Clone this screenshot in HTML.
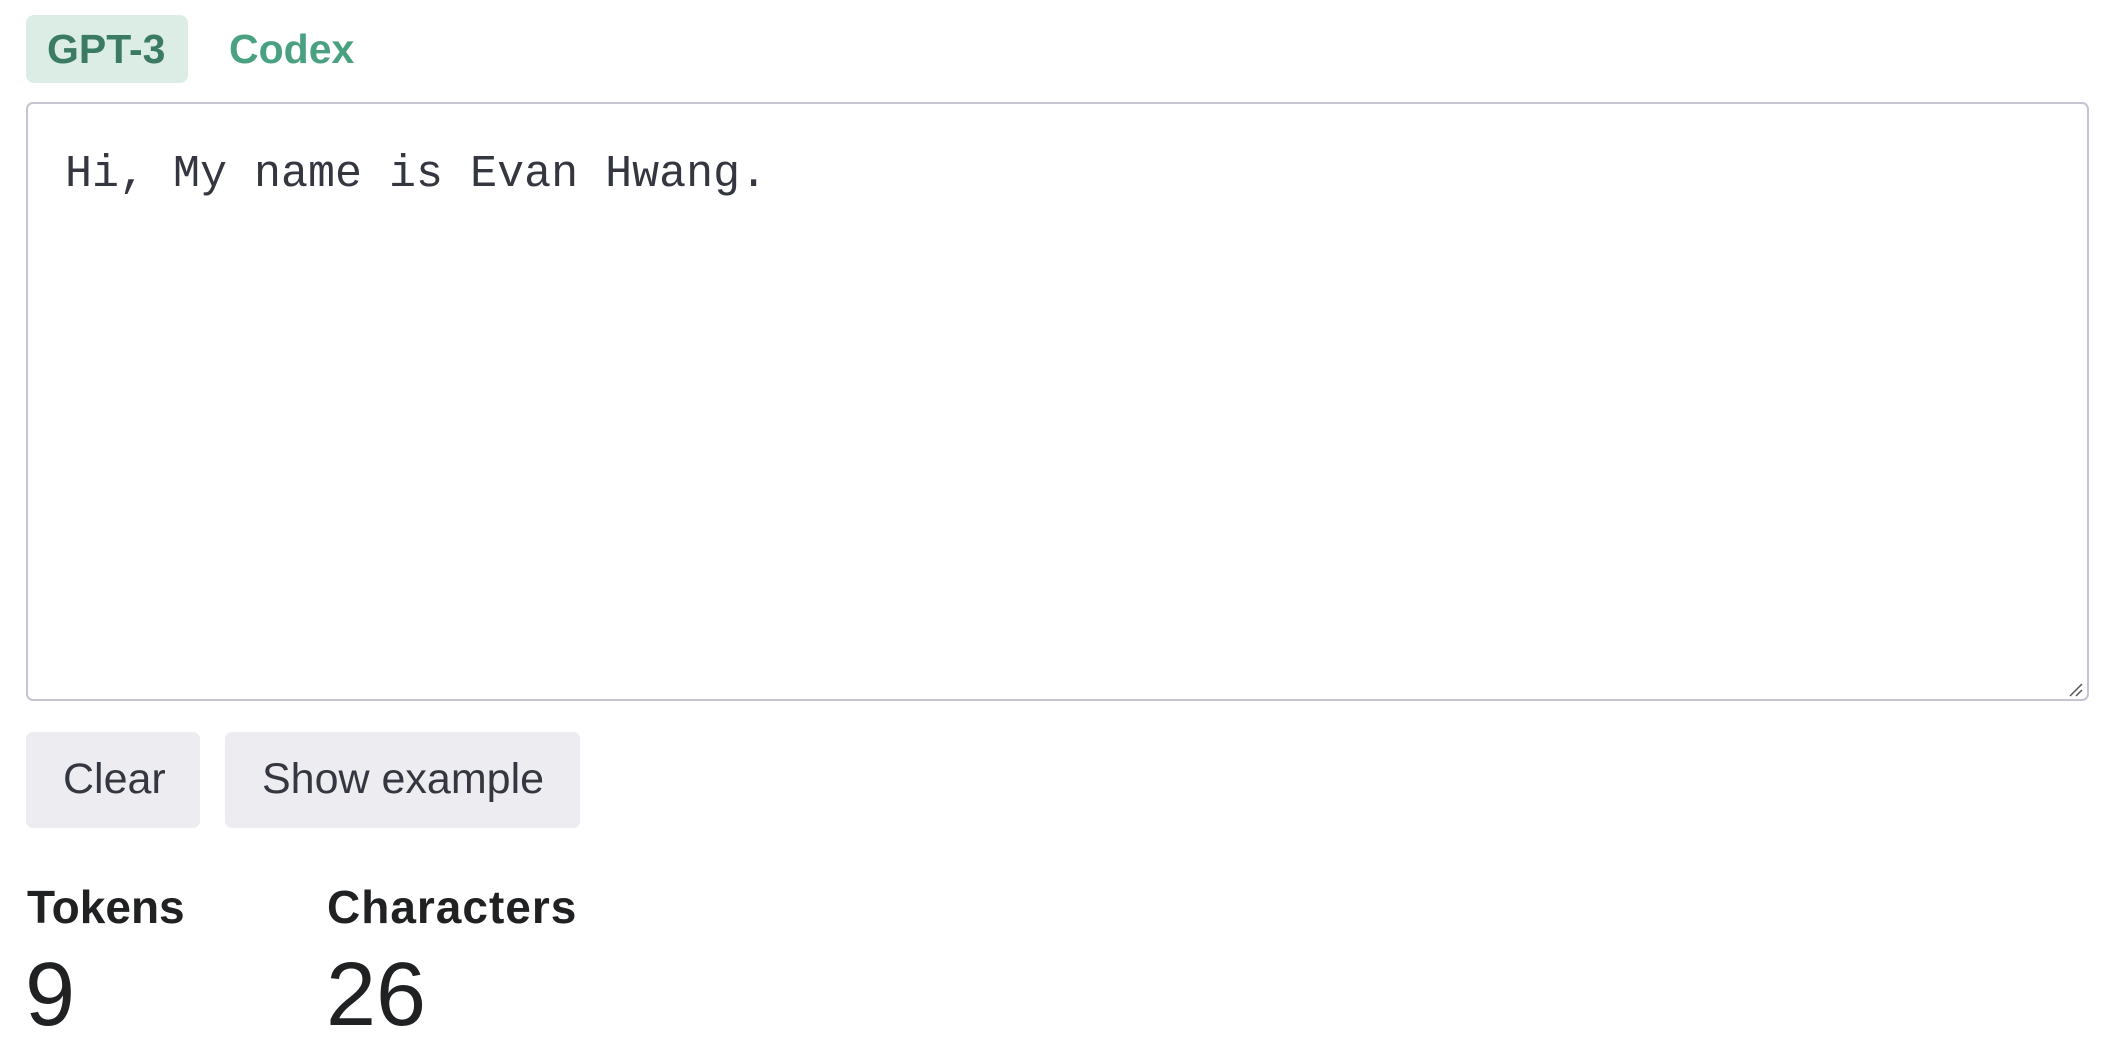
<!DOCTYPE html>
<html><head><meta charset="utf-8"><style>
body{margin:0;width:2110px;height:1062px;background:#fff;font-family:"Liberation Sans",sans-serif;position:relative;overflow:hidden}
.a{position:absolute;white-space:nowrap}
.tab{left:26px;top:15px;width:162px;height:68px;background:#dcede6;border-radius:8px}
.tt{font-weight:bold;font-size:41px;line-height:1}
.ta{left:26px;top:102px;width:2059px;height:595px;border:2px solid #c5c5d2;border-radius:7px}
.btn{background:#ececf1;border-radius:7px;height:96px;top:732px}
.bt{font-size:43px;color:#353740;line-height:1}
.h{font-weight:bold;font-size:46px;line-height:1;color:#202123;top:884px}
</style></head><body>
<div class="a tab"></div>
<div class="a tt" style="left:47px;top:29px;color:#3b7b63">GPT-3</div>
<div class="a tt" style="left:229px;top:29px;color:#4aa181">Codex</div>
<div class="a ta"></div>
<div class="a" style="left:65px;top:152px;font-family:'Liberation Mono',monospace;font-size:45px;line-height:1;color:#353740">Hi, My name is Evan Hwang.</div>
<svg class="a" style="left:2068px;top:682px" width="16" height="16"><path d="M2 14L14 2M8 14L14 8" stroke="#555" stroke-width="1.5"/></svg>
<div class="a btn" style="left:26px;width:174px"></div>
<div class="a btn" style="left:225px;width:355px"></div>
<div class="a bt" style="left:63px;top:758px">Clear</div>
<div class="a bt" style="left:262px;top:758px">Show example</div>
<div class="a h" style="left:27px">Tokens</div>
<div class="a h" style="left:327px;letter-spacing:1px">Characters</div>
<div class="a" style="left:25px;top:950px;font-size:90px;line-height:1;color:#202123">9</div>
<div class="a" style="left:326px;top:950px;font-size:90px;line-height:1;color:#202123">26</div>
</body></html>
